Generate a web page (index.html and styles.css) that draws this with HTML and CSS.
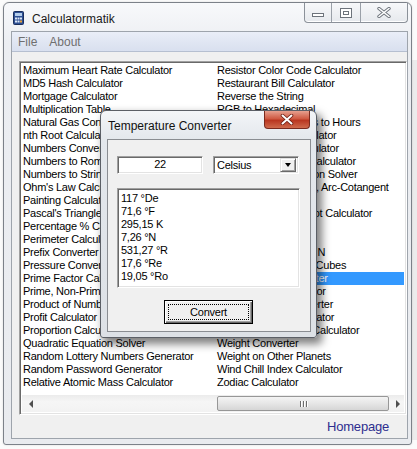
FILE: index.html
```html
<!DOCTYPE html>
<html>
<head>
<meta charset="utf-8">
<title>Calculatormatik</title>
<link rel="stylesheet" href="styles.css">
</head>
<body>
<div class="behind"></div>

<div class="win main">
  <div class="titlebar">
    <svg class="appicon" width="11" height="14" viewBox="0 0 11 14">
      <rect x="0.5" y="0.5" width="10" height="13" rx="1" fill="#2d4f93" stroke="#1a2e5c"/>
      <rect x="2" y="2" width="7" height="3" fill="#b4cdeb"/>
      <g fill="#dbe6f6">
        <rect x="2" y="6.5" width="2" height="2"/><rect x="4.5" y="6.5" width="2" height="2"/><rect x="7" y="6.5" width="2" height="2"/>
        <rect x="2" y="9.5" width="2" height="2"/><rect x="4.5" y="9.5" width="2" height="2"/>
      </g>
      <rect x="7" y="9.5" width="2" height="2" fill="#e9a23b"/>
    </svg>
    <span class="title">Calculatormatik</span>
    <div class="caps">
      <div class="cap cap-min">
        <svg width="14" height="6" viewBox="0 0 14 6"><rect x="1.5" y="1.5" width="11" height="3" fill="#fff" stroke="#6d737b"/></svg>
      </div>
      <div class="cap cap-max">
        <svg width="12" height="10" viewBox="0 0 12 10"><rect x="0.5" y="0.5" width="11" height="9" fill="#fff" stroke="#6d737b"/><rect x="3.5" y="3.5" width="5" height="3" fill="none" stroke="#6d737b"/></svg>
      </div>
      <div class="cap cap-close">
        <svg width="14" height="11" viewBox="0 0 14 11"><path d="M2 1.5 L12 9.5 M12 1.5 L2 9.5" stroke="#6d737b" stroke-width="3.4" stroke-linecap="round"/><path d="M2 1.5 L12 9.5 M12 1.5 L2 9.5" stroke="#fff" stroke-width="1.6" stroke-linecap="round"/></svg>
      </div>
    </div>
  </div>
  <div class="client">
    <div class="menubar"><span class="menuitem">File</span><span class="menuitem">About</span></div>
    <div class="listbox sunken">
      <div class="items">
        <div class="item">Maximum Heart Rate Calculator</div>
        <div class="item">MD5 Hash Calculator</div>
        <div class="item">Mortgage Calculator</div>
        <div class="item">Multiplication Table</div>
        <div class="item">Natural Gas Consumption Calculator</div>
        <div class="item">nth Root Calculator</div>
        <div class="item">Numbers Converter</div>
        <div class="item">Numbers to Roman Numerals</div>
        <div class="item">Numbers to Strings</div>
        <div class="item">Ohm's Law Calculator</div>
        <div class="item">Painting Calculator</div>
        <div class="item">Pascal's Triangle</div>
        <div class="item">Percentage % Calculator</div>
        <div class="item">Perimeter Calculator</div>
        <div class="item">Prefix Converter</div>
        <div class="item">Pressure Converter</div>
        <div class="item">Prime Factor Calculator</div>
        <div class="item">Prime, Non-Prime Numbers</div>
        <div class="item">Product of Numbers</div>
        <div class="item">Profit Calculator</div>
        <div class="item">Proportion Calculator</div>
        <div class="item">Quadratic Equation Solver</div>
        <div class="item">Random Lottery Numbers Generator</div>
        <div class="item">Random Password Generator</div>
        <div class="item">Relative Atomic Mass Calculator</div>
        <div class="item">Resistor Color Code Calculator</div>
        <div class="item">Restaurant Bill Calculator</div>
        <div class="item">Reverse the String</div>
        <div class="item">RGB to Hexadecimal</div>
        <div class="item">Seconds and Minutes to Hours</div>
        <div class="item">Simple Interest Calculator</div>
        <div class="item">Sphere Volume Calculator</div>
        <div class="item">Standard Deviation Calculator</div>
        <div class="item">Simultaneous Equation Solver</div>
        <div class="item">Tangent, Arc-Tangent, Arc-Cotangent</div>
        <div class="item">Tip Calculator</div>
        <div class="item">Universal Square Root Calculator</div>
        <div class="item">Unit Converter</div>
        <div class="item">Vector Calculator</div>
        <div class="item">Vectors Magnitude in N</div>
        <div class="item">Sum of Squares and Cubes</div>
        <div class="item selected">Volume Units Converter</div>
        <div class="item">Water Intake Calculator</div>
        <div class="item">Watts to Amps Converter</div>
        <div class="item">Week Number Calculator</div>
        <div class="item">Water Consumption Calculator</div>
        <div class="item">Weight Converter</div>
        <div class="item">Weight on Other Planets</div>
        <div class="item">Wind Chill Index Calculator</div>
        <div class="item">Zodiac Calculator</div>
      </div>
      <div class="hscroll">
        <div class="sbtn"><span class="tri-left"></span></div>
        <div class="track"><div class="thumb"><span class="grip"></span><span class="grip"></span><span class="grip"></span></div></div>
        <div class="sbtn"><span class="tri-right"></span></div>
      </div>
    </div>
    <div class="footer"><a class="homepage">Homepage</a></div>
  </div>
</div>

<div class="win dialog">
  <div class="dtitlebar">
    <span class="dtitle">Temperature Converter</span>
    <div class="dclose">
      <svg width="14" height="11" viewBox="0 0 14 11"><path d="M2.5 1.5 L11.5 9.5 M11.5 1.5 L2.5 9.5" stroke="#6b1d12" stroke-width="3.6" stroke-linecap="round"/><path d="M2.5 1.5 L11.5 9.5 M11.5 1.5 L2.5 9.5" stroke="#fff" stroke-width="2" stroke-linecap="round"/></svg>
    </div>
  </div>
  <div class="dclient">
    <div class="inputs">
      <div class="textbox sunken">22</div>
      <div class="combo sunken">
        <span class="combotext">Celsius</span>
        <span class="dropbtn"><span class="tri-down"></span></span>
      </div>
    </div>
    <div class="results sunken">
      <div>117 °De</div>
      <div>71,6 °F</div>
      <div>295,15 K</div>
      <div>7,26 °N</div>
      <div>531,27 °R</div>
      <div>17,6 °Re</div>
      <div>19,05 °Ro</div>
    </div>
    <div class="btnrow"><div class="button"><span class="focus">Convert</span></div></div>
  </div>
</div>
</body>
</html>
```
FILE: styles.css
```css
html, body {
  margin: 0;
  padding: 0;
}
body {
  width: 417px;
  height: 449px;
  overflow: hidden;
  position: relative;
  background: #fbfbfb;
  font-family: "Liberation Sans", Arial, sans-serif;
}

.behind {
  position: absolute;
  left: 405px;
  top: 60px;
  width: 20px;
  height: 380px;
  background: #ececec;
  border-left: 1px solid #c8c8c8;
}

.win {
  position: absolute;
  box-sizing: border-box;
  display: flex;
  flex-direction: column;
}

/* main window */
.main {
  left: 3px;
  top: 2px;
  width: 409px;
  height: 443px;
  border: 1px solid #7c8189;
  border-radius: 6px 6px 3px 3px;
  background: linear-gradient(#f8f9fb, #eceef2 40px, #e9ebef);
  padding: 0 3px 5px 7px;
  box-shadow: 0 0 2px rgba(0,0,0,0.15);
}
.titlebar {
  height: 28px;
  display: flex;
  align-items: center;
  flex: none;
}
.appicon {
  margin-left: 2px;
  margin-top: 2px;
  flex: none;
}
.title {
  margin-left: 8px;
  margin-top: 3px;
  font-size: 12px;
  color: #1a1a1a;
}
.caps {
  margin-left: auto;
  align-self: flex-start;
  display: flex;
  height: 19px;
  border: 1px solid #8b9199;
  border-top: none;
  border-radius: 0 0 4px 4px;
  background: linear-gradient(#f7f8fa, #e6e9ed);
  box-shadow: inset 0 -1px 0 #fff;
}
.cap {
  display: flex;
  align-items: center;
  justify-content: center;
}
.cap-min { width: 27px; border-right: 1px solid #9aa0a8; padding-top: 4px; box-sizing: border-box; }
.cap-max { width: 28px; border-right: 1px solid #9aa0a8; }
.cap-close { width: 46px; }

.client {
  flex: 1;
  display: flex;
  flex-direction: column;
  border: 1px solid #9ea4ac;
  background: #f0f0f0;
  overflow: hidden;
}
.menubar {
  height: 19px;
  flex: none;
  display: flex;
  align-items: center;
  background: linear-gradient(#eaeef8, #dfe5f2 60%, #d9e0ef);
  border-bottom: 1px solid #b6bfd0;
}
.menuitem {
  padding: 0 6px;
  font-size: 12px;
  color: #6f6f6f;
}

.sunken {
  box-sizing: border-box;
  border: 1px solid;
  border-color: #a0a0a0 #ffffff #ffffff #a0a0a0;
  box-shadow: inset 1px 1px 0 #696969, inset -1px -1px 0 #e3e3e3;
  background: #fff;
}

.listbox {
  margin: 9px 0 0 7px;
  height: 354px;
  flex: none;
  padding: 2px;
  display: flex;
  flex-direction: column;
}
.items {
  display: grid;
  grid-auto-flow: column;
  grid-template-rows: repeat(25, 13px);
  grid-auto-columns: 194px;
  overflow: hidden;
  flex: 1;
}
.item {
  font-size: 11px;
  letter-spacing: -0.25px;
  line-height: 13px;
  padding-left: 1px;
  white-space: nowrap;
  overflow: hidden;
  color: #000;
}
.item.selected {
  background: #3399ff;
  color: #fff;
}

.hscroll {
  height: 17px;
  flex: none;
  display: flex;
  background: linear-gradient(#ebebeb, #f6f6f6 40%, #f2f2f2);
}
.sbtn {
  width: 17px;
  display: flex;
  align-items: center;
  justify-content: center;
  flex: none;
}
.tri-left {
  width: 0; height: 0;
  border-top: 4px solid transparent;
  border-bottom: 4px solid transparent;
  border-right: 4px solid #505050;
}
.tri-right {
  width: 0; height: 0;
  border-top: 4px solid transparent;
  border-bottom: 4px solid transparent;
  border-left: 4px solid #505050;
}
.track {
  flex: 1;
  display: flex;
  align-items: center;
}
.thumb {
  margin-left: 178px;
  width: 172px;
  height: 15px;
  box-sizing: border-box;
  border: 1px solid #979797;
  border-radius: 2px;
  background: linear-gradient(#f4f4f4, #e6e6e6 50%, #d6d6d6);
  display: flex;
  justify-content: center;
  align-items: center;
  gap: 2px;
}
.grip {
  width: 1px;
  height: 6px;
  background: #6d6d6d;
  box-shadow: 1px 0 0 #fff;
}

.footer {
  flex: 1;
  display: flex;
  justify-content: flex-end;
  align-items: center;
  padding-right: 18px;
}
.homepage {
  font-size: 13px;
  color: #2e2e8f;
  letter-spacing: -0.2px;
}

/* dialog */
.dialog {
  left: 100px;
  top: 110px;
  width: 217px;
  height: 228px;
  border: 1px solid #5b5f66;
  border-radius: 6px 6px 3px 3px;
  background: linear-gradient(#f3f5f8, #e3e7ec 30px, #dde1e6);
  padding: 0 5px 5px 6px;
  box-shadow: 4px 5px 9px 1px rgba(0,0,0,0.5);
}
.dtitlebar {
  height: 28px;
  flex: none;
  display: flex;
  align-items: center;
}
.dtitle {
  margin-left: 1px;
  margin-top: 1px;
  font-size: 12px;
  color: #111;
}
.dclose {
  margin-left: auto;
  margin-right: 1px;
  align-self: flex-start;
  width: 46px;
  height: 18px;
  box-sizing: border-box;
  border: 1px solid #7a2a1e;
  border-top: none;
  border-radius: 0 0 4px 4px;
  background: linear-gradient(#e7a08f, #cf5a43 45%, #b93620 55%, #cf6a4c);
  display: flex;
  align-items: center;
  justify-content: center;
}
.dclient {
  flex: 1;
  border: 1px solid #8a8d92;
  background: #f0f0f0;
  padding: 16px 0 0 9px;
  display: flex;
  flex-direction: column;
}
.inputs {
  display: flex;
  gap: 10px;
}
.textbox {
  width: 86px;
  height: 18px;
  font-size: 11px;
  letter-spacing: -0.25px;
  line-height: 14px;
  text-align: center;
}
.combo {
  width: 86px;
  height: 18px;
  display: flex;
  align-items: center;
  padding: 2px;
}
.combotext {
  flex: 1;
  font-size: 11px;
  letter-spacing: -0.25px;
  padding-left: 1px;
}
.dropbtn {
  width: 16px;
  height: 14px;
  box-sizing: border-box;
  border: 1px solid;
  border-color: #e3e3e3 #696969 #696969 #e3e3e3;
  box-shadow: inset 1px 1px 0 #fff, inset -1px -1px 0 #a0a0a0;
  background: #f0f0f0;
  display: flex;
  align-items: center;
  justify-content: center;
}
.tri-down {
  width: 0; height: 0;
  border-left: 3.5px solid transparent;
  border-right: 3.5px solid transparent;
  border-top: 4px solid #000;
}
.results {
  margin-top: 14px;
  width: 183px;
  height: 100px;
  padding: 3px 2px 0 3px;
  font-size: 11px;
  letter-spacing: -0.25px;
  line-height: 13px;
}
.btnrow {
  width: 183px;
  display: flex;
  justify-content: center;
  margin-top: 12px;
}
.button {
  width: 89px;
  height: 24px;
  box-sizing: border-box;
  border: 1px solid #000;
  background: #f0f0f0;
  box-shadow: inset 1px 1px 0 #fff, inset -1px -1px 0 #696969, inset -2px -2px 0 #a0a0a0;
  display: flex;
  padding: 3px;
}
.focus {
  flex: 1;
  border: 1px dotted #000;
  display: flex;
  align-items: center;
  justify-content: center;
  font-size: 11px;
  letter-spacing: -0.25px;
}
```
